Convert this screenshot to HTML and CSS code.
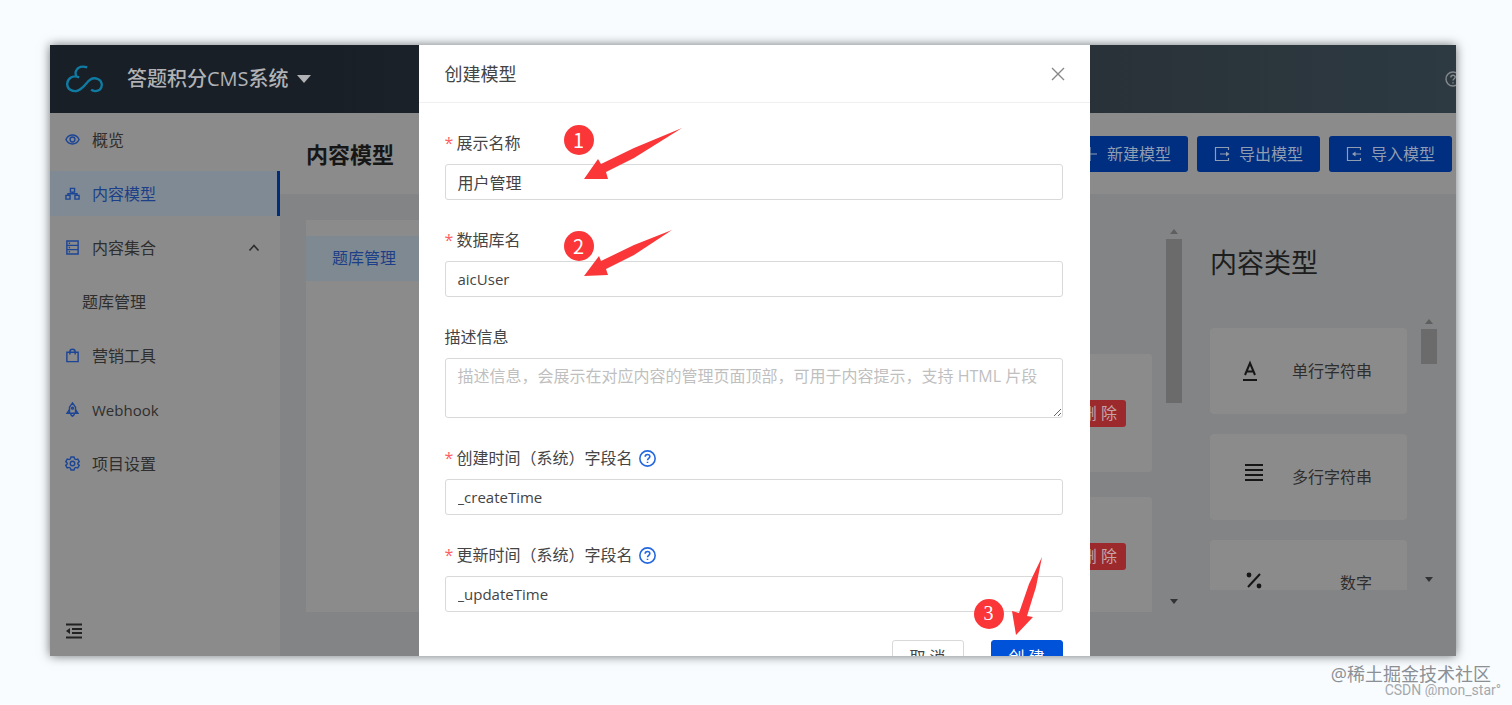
FILE: index.html
```html
<!DOCTYPE html>
<html lang="zh-CN">
<head>
    <meta charset="UTF-8">
    <title>创建模型</title>
    <link rel="stylesheet" href="styles.css">
</head>
<body>
<div class="window">
    <!-- 顶部 -->
    <header class="header">
        <svg class="logo" viewBox="76 85 116 84">
            <path d="M142 92C128 87 114 90 108 104C106 110 108 116 110 120M118 122C97 113 82 127 82 143C83 158 97 165 110 163C124 160 132 150 140 140C150 126 163 122 174 127C188 133 189 150 180 159C172 165 160 164 154 159"/>
        </svg>
        <h1 class="project">答题积分CMS系统</h1>
        <span class="caret"></span>
        <svg class="help" viewBox="0 0 16 16">
            <circle cx="8" cy="8" r="7"/>
            <path d="M5.8 6.4C5.8 3.4 10.2 3.6 10.2 6.2C10.2 7.8 8 7.8 8 9.6M8 11.2V12.4"/>
        </svg>
    </header>

    <div class="container">
        <!-- 左侧菜单 -->
        <aside class="sidebar">
            <nav class="menu">
                <a href="#">
                    <svg class="icon" viewBox="0 0 16 16"><path d="M1 8C4 1.6 12 1.6 15 8C12 14.4 4 14.4 1 8Z"/><circle cx="8" cy="8" r="2.6"/></svg>
                    概览
                </a>
                <a href="#" class="current">
                    <svg class="icon" viewBox="0 0 16 16"><path d="M5.8 2.5H10.2V6.5H5.8ZM1 10H5.4V14H1ZM10.6 10H15V14H10.6ZM8 6.5V8.2M3.2 10V8.2H12.8V10"/></svg>
                    内容模型
                </a>
                <a href="#">
                    <svg class="icon" viewBox="0 0 16 16"><path d="M2 1H14V15H2ZM2 5.7H14M2 10.3H14M4 3.4H5.4M4 8H5.4M4 12.6H5.4"/></svg>
                    内容集合
                    <svg class="arrow" viewBox="0 0 12 12"><path d="M1.5 8.5L6 3.5L10.5 8.5"/></svg>
                </a>
                <a href="#" class="sub">题库管理</a>
                <a href="#">
                    <svg class="icon" viewBox="0 0 16 16"><path d="M2 4.5H14V14.5H2ZM5.2 7V4C5.2 .4 10.8 .4 10.8 4V7"/></svg>
                    营销工具
                </a>
                <a href="#" class="latin">
                    <svg class="icon" viewBox="0 0 16 16"><path d="M4.8 12V5.5L8 1L11.2 5.5V12ZM4.8 8L2.2 12H4.8M11.2 8L13.8 12H11.2M6 12.2C6 14 7 14.4 8 15.2C9 14.4 10 14 10 12.2"/><circle cx="8" cy="6.6" r="1"/></svg>
                    Webhook
                </a>
                <a href="#">
                    <svg class="icon" viewBox="0 0 16 16"><path d="M6.4 1H9.6L10.2 3L11.6 3.8L13.6 3.3L15.2 6L13.7 7.4V8.6L15.2 10L13.6 12.7L11.6 12.2L10.2 13L9.6 15H6.4L5.8 13L4.4 12.2L2.4 12.7L.8 10L2.3 8.6V7.4L.8 6L2.4 3.3L4.4 3.8L5.8 3Z"/><circle cx="8" cy="8" r="2.4"/></svg>
                    项目设置
                </a>
            </nav>
            <button class="fold" aria-label="收起菜单">
                <svg viewBox="0 0 18 16"><path d="M1 1.5H17M7 6H17M7 10H17M1 14.5H17"/><path class="solid" d="M5 5V11L1 8Z"/></svg>
            </button>
        </aside>

        <!-- 主体 -->
        <main class="main">
            <div class="page-head">
                <h2>内容模型</h2>
                <button class="btn">
                    <svg viewBox="0 0 16 16"><path d="M1 8H15M8 1V15"/></svg>新建模型
                </button>
                <button class="btn">
                    <svg viewBox="0 0 16 16"><path d="M14.5 4V1.5H1.5V14.5H14.5V12M6 8H13"/><path class="solid" d="M12 5.5V10.5L15.5 8Z"/></svg>导出模型
                </button>
                <button class="btn">
                    <svg viewBox="0 0 16 16"><path d="M14.5 4V1.5H1.5V14.5H14.5V12M8 8H15"/><path class="solid" d="M9.5 5.5V10.5L6 8Z"/></svg>导入模型
                </button>
            </div>

            <div class="content">
                <div class="models">
                    <a href="#" class="current">题库管理</a>
                </div>

                <div class="fields">
                    <div class="field"><button class="del">删 除</button></div>
                    <div class="field"><button class="del">删 除</button></div>
                </div>
                <div class="scroll">
                    <span class="up"></span>
                    <span class="thumb"></span>
                    <span class="down"></span>
                </div>

                <div class="types">
                    <h3>内容类型</h3>
                    <div class="types-body">
                        <ul>
                            <li>
                                <svg viewBox="0 0 24 24"><path d="M3 16L8 4L13 16M4.8 12.5H11.2M1 21H15"/></svg>
                                单行字符串
                            </li>
                            <li>
                                <svg viewBox="0 0 24 24"><path d="M3 0H21M3 5H21M3 10H21M3 15H21"/></svg>
                                多行字符串
                            </li>
                            <li>
                                <svg viewBox="0 0 24 24"><path d="M6 16L18 3"/><circle class="solid" cx="7" cy="4" r="2.4"/><circle class="solid" cx="17" cy="15" r="2.4"/></svg>
                                数字
                            </li>
                        </ul>
                        <div class="scroll">
                            <span class="up"></span>
                            <span class="thumb short"></span>
                            <span class="down"></span>
                        </div>
                    </div>
                </div>
            </div>
        </main>
    </div>

    <!-- 弹窗 -->
    <div class="modal-wrap">
        <div class="modal" role="dialog" aria-labelledby="modal-title">
            <div class="modal-head">
                <h2 id="modal-title">创建模型</h2>
                <button class="close" aria-label="关闭">
                    <svg viewBox="0 0 14 14"><path d="M1 1L13 13M13 1L1 13"/></svg>
                </button>
            </div>
            <form class="form">
                <div class="item">
                    <label for="name"><i>*</i>展示名称</label>
                    <input type="text" id="name" value="用户管理">
                </div>
                <div class="item">
                    <label for="db"><i>*</i>数据库名</label>
                    <input type="text" id="db" class="latin" value="aicUser">
                </div>
                <div class="item">
                    <label for="desc">描述信息</label>
                    <textarea id="desc" placeholder="描述信息，会展示在对应内容的管理页面顶部，可用于内容提示，支持 HTML 片段"></textarea>
                </div>
                <div class="item">
                    <label for="ctime"><i>*</i>创建时间（系统）字段名
                        <svg class="tip" viewBox="0 0 16 16"><circle cx="8" cy="8" r="7.2"/><path d="M5.8 6.4C5.8 3.4 10.2 3.6 10.2 6.2C10.2 7.8 8 7.8 8 9.6M8 11V12.3"/></svg>
                    </label>
                    <input type="text" id="ctime" class="latin" value="_createTime">
                </div>
                <div class="item">
                    <label for="utime"><i>*</i>更新时间（系统）字段名
                        <svg class="tip" viewBox="0 0 16 16"><circle cx="8" cy="8" r="7.2"/><path d="M5.8 6.4C5.8 3.4 10.2 3.6 10.2 6.2C10.2 7.8 8 7.8 8 9.6M8 11V12.3"/></svg>
                    </label>
                    <input type="text" id="utime" class="latin" value="_updateTime">
                </div>
                <div class="actions">
                    <button type="button">取 消</button>
                    <button type="submit" class="primary">创 建</button>
                </div>
            </form>

            <!-- 步骤标注 -->
            <svg class="marks" viewBox="419 45 671 611">
                <path d="M584 179L598 159L601 164L634 148L682 128L634 158L606 172L608 179Z"/>
                <path d="M584 276L599 256L601 261L634 245L672 230L634 255L606 269L608 275Z"/>
                <path d="M1016 635L1012 611L1019 613L1029 584L1042 557L1036 587L1027 616L1033 617Z"/>
            </svg>
            <span class="badge step1">1</span>
            <span class="badge step2">2</span>
            <span class="badge step3">3</span>
        </div>
    </div>
</div>

<footer class="watermark">
    <p class="site">@稀土掘金技术社区</p>
    <p class="author">CSDN @mon_star°</p>
</footer>
</body>
</html>
```
FILE: styles.css
```css
* {
    margin: 0;
    padding: 0;
    box-sizing: border-box;
}

body {
    background-color: #f8fcff;
    font: 16px/24px "Open Sans", "Noto Sans CJK SC", sans-serif;
    color: #2e2e2e;
    overflow: hidden;
}

a {
    color: inherit;
    text-decoration: none;
}

ul {
    list-style: none;
}

button,
input,
textarea {
    font: inherit;
}

button {
    border: none;
    background: none;
    cursor: pointer;
}

svg {
    fill: none;
    stroke: currentColor;
    flex-shrink: 0;
}

svg .solid {
    fill: currentColor;
    stroke: none;
}

.window {
    position: relative;
    display: flex;
    flex-direction: column;
    height: calc(100vh - 94px);
    margin: 45px 56px 0 50px;
    background-color: #828485;
    box-shadow: 0 0 10px rgba(0, 0, 0, .55);
}

/* 顶部 */
.header {
    display: flex;
    align-items: center;
    height: 68px;
    padding-left: 15px;
    background: linear-gradient(90deg, #191f27 20%, #293238 75%, #2d3a42);
    color: #b0b2b5;
    overflow: hidden;
}

.logo {
    width: 39px;
    height: 28px;
    margin-right: 23px;
    color: #0f7ba2;
    stroke-width: 7;
}

.project {
    font-size: 20px;
    font-weight: 500;
}

.caret {
    margin-left: 8px;
    border: 7px solid transparent;
    border-top: 8px solid #b0b2b5;
    border-bottom: none;
}

.help {
    width: 16px;
    height: 16px;
    margin: 0 -5px 0 auto;
    color: #85898c;
    stroke-width: 1.4;
}

.container {
    display: flex;
    flex: 1;
    min-height: 0;
}

/* 左侧菜单 */
.sidebar {
    display: flex;
    flex-direction: column;
    justify-content: space-between;
    width: 230px;
    padding: 4px 0 16px;
    background-color: #8b8b8b;
}

.menu {
    display: flex;
    flex-direction: column;
    gap: 9px;
}

.menu a {
    display: flex;
    align-items: center;
    gap: 12px;
    height: 45px;
    padding: 0 20px 0 15px;
}

.menu .current {
    border-right: 3px solid #002d7b;
    background-color: #7f8a94;
    color: #1c3f87;
}

.menu .sub {
    padding-left: 32px;
}

.menu .latin,
.item .latin {
    font-size: 15px;
}

.icon {
    width: 15px;
    height: 15px;
    color: #1c4595;
    stroke-width: 1.5;
}

.arrow {
    width: 12px;
    height: 12px;
    margin-left: auto;
    stroke-width: 1.6;
}

.fold {
    width: 18px;
    height: 18px;
    margin-left: 15px;
    color: #222;
}

.fold svg {
    display: block;
    width: 18px;
    height: 16px;
    stroke-width: 1.8;
}

/* 主体 */
.main {
    display: flex;
    flex-direction: column;
    flex: 1;
    min-width: 0;
}

.page-head {
    display: flex;
    align-items: center;
    gap: 9px;
    height: 81px;
    padding: 0 4px 0 26px;
    background-color: #8b8b8b;
}

.page-head h2 {
    margin-right: auto;
    font-size: 22px;
    color: #161616;
}

.btn {
    display: flex;
    align-items: center;
    gap: 9px;
    height: 36px;
    padding: 0 17px;
    border-radius: 3px;
    background-color: #002e80;
    color: #8f9db2;
}

.btn svg {
    width: 16px;
    height: 16px;
    stroke-width: 1.2;
}

.content {
    display: flex;
    flex: 1;
    min-height: 0;
    padding: 26px 19px 44px 26px;
}

.models {
    width: 260px;
    padding-top: 16px;
    background-color: #8b8b8b;
}

.models a {
    display: block;
    padding: 0 26px;
    line-height: 45px;
    background-color: #7f8992;
    color: #1c3f87;
}

.fields {
    display: flex;
    flex-direction: column;
    gap: 25px;
    flex: 1;
    padding: 134px 14px 0 26px;
    overflow: hidden;
}

.field {
    display: flex;
    align-items: center;
    justify-content: flex-end;
    flex-shrink: 0;
    height: 118px;
    padding-right: 26px;
    border-radius: 3px;
    background-color: #8b8b8b;
}

.del {
    height: 27px;
    padding: 0 9px;
    border-radius: 3px;
    background-color: #9c2a2d;
    color: #c3a5a5;
}

.scroll {
    display: flex;
    flex-direction: column;
    align-items: center;
    width: 16px;
    padding: 9px 0 8px;
}

.up {
    border: 4px solid transparent;
    border-top: none;
    border-bottom: 5px solid #5f5f5f;
}

.down {
    margin-top: auto;
    border: 4px solid transparent;
    border-top: 5px solid #333;
    border-bottom: none;
}

.thumb {
    width: 16px;
    height: 164px;
    margin-top: 5px;
    background-color: #6b6b6b;
}

.thumb.short {
    height: 35px;
}

.types {
    display: flex;
    flex-direction: column;
    width: 227px;
    margin-left: 28px;
    padding: 23px 0 22px;
}

.types h3 {
    font-size: 27px;
    line-height: 40px;
    font-weight: 400;
    margin-bottom: 27px;
    color: #1d1d1d;
}

.types-body {
    display: flex;
    justify-content: space-between;
    flex: 1;
    min-height: 0;
}

.types ul {
    display: flex;
    flex-direction: column;
    gap: 20px;
    width: 197px;
    padding-top: 18px;
    overflow: hidden;
}

.types li {
    display: flex;
    align-items: center;
    justify-content: space-between;
    flex-shrink: 0;
    height: 86px;
    padding: 0 35px 0 32px;
    border-radius: 4px;
    background-color: #8b8b8b;
}

.types li svg {
    width: 24px;
    height: 24px;
    color: #161616;
    stroke-width: 2;
    overflow: visible;
}

/* 弹窗 */
.modal-wrap {
    position: absolute;
    inset: 0;
    display: flex;
    align-items: flex-start;
    justify-content: center;
    padding-left: 2px;
    overflow: hidden;
}

.modal {
    position: relative;
    width: 671px;
    background-color: #fff;
    color: #444;
}

.modal-head {
    display: flex;
    align-items: center;
    justify-content: space-between;
    height: 58px;
    padding: 0 25px 0 26px;
    border-bottom: 1px solid #f0f0f0;
}

.modal-head h2 {
    font-size: 18px;
    font-weight: 400;
}

.close {
    width: 14px;
    height: 14px;
    color: #888;
}

.close svg {
    display: block;
    stroke-width: 1.4;
}

.form {
    display: flex;
    flex-direction: column;
    gap: 28px;
    padding: 28px 27px 28px 26px;
}

.item {
    display: flex;
    flex-direction: column;
    gap: 9px;
}

.item label {
    display: flex;
    align-items: center;
}

.item i {
    width: 12px;
    font-style: normal;
    color: #ff5f62;
}

.tip {
    width: 17px;
    height: 17px;
    margin-left: 6px;
    color: #2468e0;
    stroke-width: 1.5;
}

.item input,
.item textarea {
    width: 100%;
    height: 36px;
    padding: 0 12px;
    border: 1px solid #d9d9d9;
    border-radius: 3px;
    background-color: #fff;
    color: #444;
    outline: none;
}

.item textarea {
    display: block;
    height: 60px;
    padding: 5px 12px;
    resize: vertical;
}

.item textarea::placeholder {
    color: #bfbfbf;
}

.actions {
    display: flex;
    justify-content: flex-end;
    gap: 27px;
}

.actions button {
    width: 72px;
    height: 34px;
    border: 1px solid #d9d9d9;
    border-radius: 3px;
    color: #444;
}

.actions .primary {
    border-color: #0052d9;
    background-color: #0052d9;
    color: #fff;
}

/* 步骤标注 */
.marks {
    position: absolute;
    left: 0;
    top: 0;
    width: 671px;
    height: 611px;
    fill: #fb3638;
    stroke: none;
    pointer-events: none;
}

.badge {
    position: absolute;
    width: 30px;
    height: 30px;
    border-radius: 50%;
    background-color: #fb3638;
    color: #fff;
    font: 20px/29px "Noto Sans CJK SC", sans-serif;
    text-align: center;
}

.step1 {
    left: 145px;
    top: 80px;
}

.step2 {
    left: 145px;
    top: 186px;
}

.step3 {
    left: 555px;
    top: 554px;
    font-family: "Liberation Serif", serif;
}

/* 水印 */
.watermark {
    padding-top: 9px;
    text-align: right;
}

.site {
    padding-right: 21px;
    font-size: 18px;
    line-height: 18px;
    color: #8c9094;
}

.author {
    padding-right: 11px;
    font: 14px/14px Roboto, "Liberation Sans", sans-serif;
    color: #a4a9ad;
}
```
